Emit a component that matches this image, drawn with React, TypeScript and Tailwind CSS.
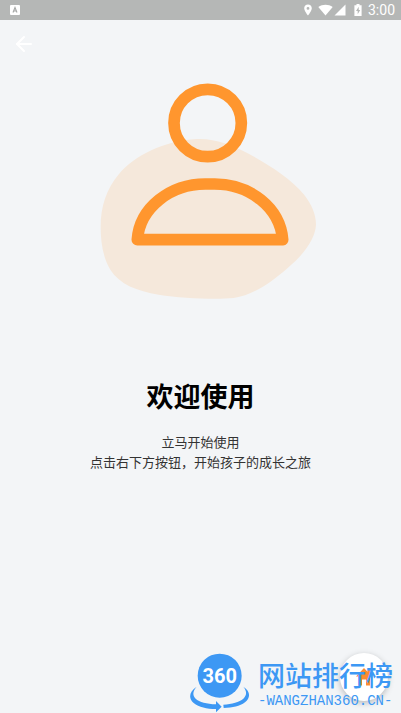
import { ArrowLeft } from "lucide-react";

function StatusBar() {
  return (
    <div className="flex h-5 items-center bg-[#b5b7b6] pr-1.5 pl-2.5 text-white">
      <svg viewBox="0 0 10 10" className="size-2.5" aria-hidden="true">
        <rect width="10" height="10" rx="1" fill="currentColor" />
        <path d="M3 7.5 5 2.5 7 7.5M3.7 6h2.6" fill="none" stroke="#a5a7a6" strokeWidth="1.1" />
      </svg>
      <div className="ml-auto flex items-center">
        <svg viewBox="0 0 8 12" className="h-3 w-2" aria-hidden="true">
          <path
            fillRule="evenodd"
            fill="currentColor"
            d="M4 0.5C1.8 0.5 0.2 2.1 0.2 4.3 0.2 7 4 11.5 4 11.5S7.8 7 7.8 4.3C7.8 2.1 6.2 0.5 4 0.5ZM4 3a1.4 1.4 0 1 1 0 2.8A1.4 1.4 0 0 1 4 3Z"
          />
        </svg>
        <svg viewBox="0 0 15 12" className="ml-1.5 h-3 w-[15px]" aria-hidden="true">
          <path d="M0.3 3C4.5-.1 10.5-.1 14.7 3L7.5 11.5Z" fill="currentColor" />
        </svg>
        <svg viewBox="0 0 12 12" className="ml-px size-3" aria-hidden="true">
          <path d="M11.5 0.5V11.5H0.5Z" fill="currentColor" />
        </svg>
        <svg viewBox="0 0 8 12" className="ml-2 h-3 w-2" aria-hidden="true">
          <path d="M2.5 0h3v1.2H7.6V12H.4V1.2h2.1Z" fill="currentColor" />
          <path d="M4.7 2.8 2 7h1.7v3.2L6.2 6H4.7Z" fill="#b5b7b6" />
        </svg>
        <span className="ml-1.5 font-['Roboto',sans-serif] text-sm leading-5">3:00</span>
      </div>
    </div>
  );
}

function WelcomeArt() {
  return (
    <svg viewBox="-28 -1 720 720" className="size-60" aria-hidden="true">
      <path
        fill="#f5e8db"
        d="M320 206C370 203 425 223 475 250C535 283 600 322 642 374C663 401 677 432 677 462C676 505 641 552 593 592C544 635 490 674 430 683C375 688 275 684 205 673C140 662 88 642 60 598C38 562 31 515 31 470C31 410 48 355 86 311C133 256 220 211 320 206Z"
      />
      <g fill="none" stroke="#ff962e" strokeLinejoin="round">
        <circle cx="352" cy="158" r="101" strokeWidth="35" />
        <path
          strokeWidth="35"
          d="M141 508C148 412 240 341 345 341H373C478 341 569 412 577 508Z"
        />
      </g>
    </svg>
  );
}

function HomeIcon() {
  return (
    <svg viewBox="0 0 18 20" className="h-5 w-[18px]" aria-hidden="true">
      <path
        fill="#fb8c2e"
        d="M9 1 1 9.5h2V18.5h4V12.5h4v6h4V9.5h2l-2-2V2.5h-2.5v2.2Z"
      />
    </svg>
  );
}

function GlobeLogo() {
  return (
    <svg viewBox="0 0 180 180" className="size-[60px] shrink-0" aria-hidden="true">
      <circle cx="89" cy="68" r="66" fill="#3d98f4" />
      <text
        x="89"
        y="90"
        textAnchor="middle"
        fill="#fff"
        fontSize="60"
        fontWeight="700"
        fontFamily="Roboto, sans-serif"
      >
        360
      </text>
      <path
        fill="#3d98f4"
        d="M20 101C-2 115-6 136 11 150C27 163 50 168 78 168V178L95 161L78 144V154C50 153 28 147 17 137C6 127 9 113 20 101Z"
      />
      <path
        fill="#3d98f4"
        d="M160 101C183 115 181 136 165 148C149 160 129 164 101 165L100 155C126 153 148 147 160 137C172 126 170 113 160 101Z"
      />
    </svg>
  );
}

function Watermark() {
  return (
    <div className="pointer-events-none absolute right-2 bottom-0 flex items-center gap-2 text-[#3d98f4]">
      <GlobeLogo />
      <div className="flex flex-col gap-1 pt-1">
        <span className="font-['Noto_Sans_CJK_SC',sans-serif] text-[27px] leading-7 font-medium">
          网站排行榜
        </span>
        <span className="font-['Liberation_Mono',monospace] text-sm leading-4">
          -WANGZHAN360.CN-
        </span>
      </div>
    </div>
  );
}

export default function App() {
  return (
    <div className="relative flex min-h-screen flex-col bg-[#f3f5f7] font-['Noto_Sans_CJK_SC',sans-serif]">
      <StatusBar />
      <header className="flex h-12 items-center px-3">
        <button type="button" aria-label="返回" className="text-white">
          <ArrowLeft className="size-6" strokeWidth={2} />
        </button>
      </header>

      <main className="flex flex-1 flex-col items-center pt-0.5 text-center">
        <WelcomeArt />
        <h1 className="mt-[66px] text-[27px] leading-10 font-bold text-black">欢迎使用</h1>
        <p className="mt-4 text-[13px] leading-5 text-[#333]">
          立马开始使用
          <br />
          点击右下方按钮，开始孩子的成长之旅
        </p>
      </main>

      <button
        type="button"
        aria-label="首页"
        className="absolute right-[13px] bottom-3 flex size-12 items-center justify-center rounded-full bg-white shadow-[0_2px_6px_rgba(0,0,0,0.25)]"
      >
        <HomeIcon />
      </button>
      <Watermark />
    </div>
  );
}
